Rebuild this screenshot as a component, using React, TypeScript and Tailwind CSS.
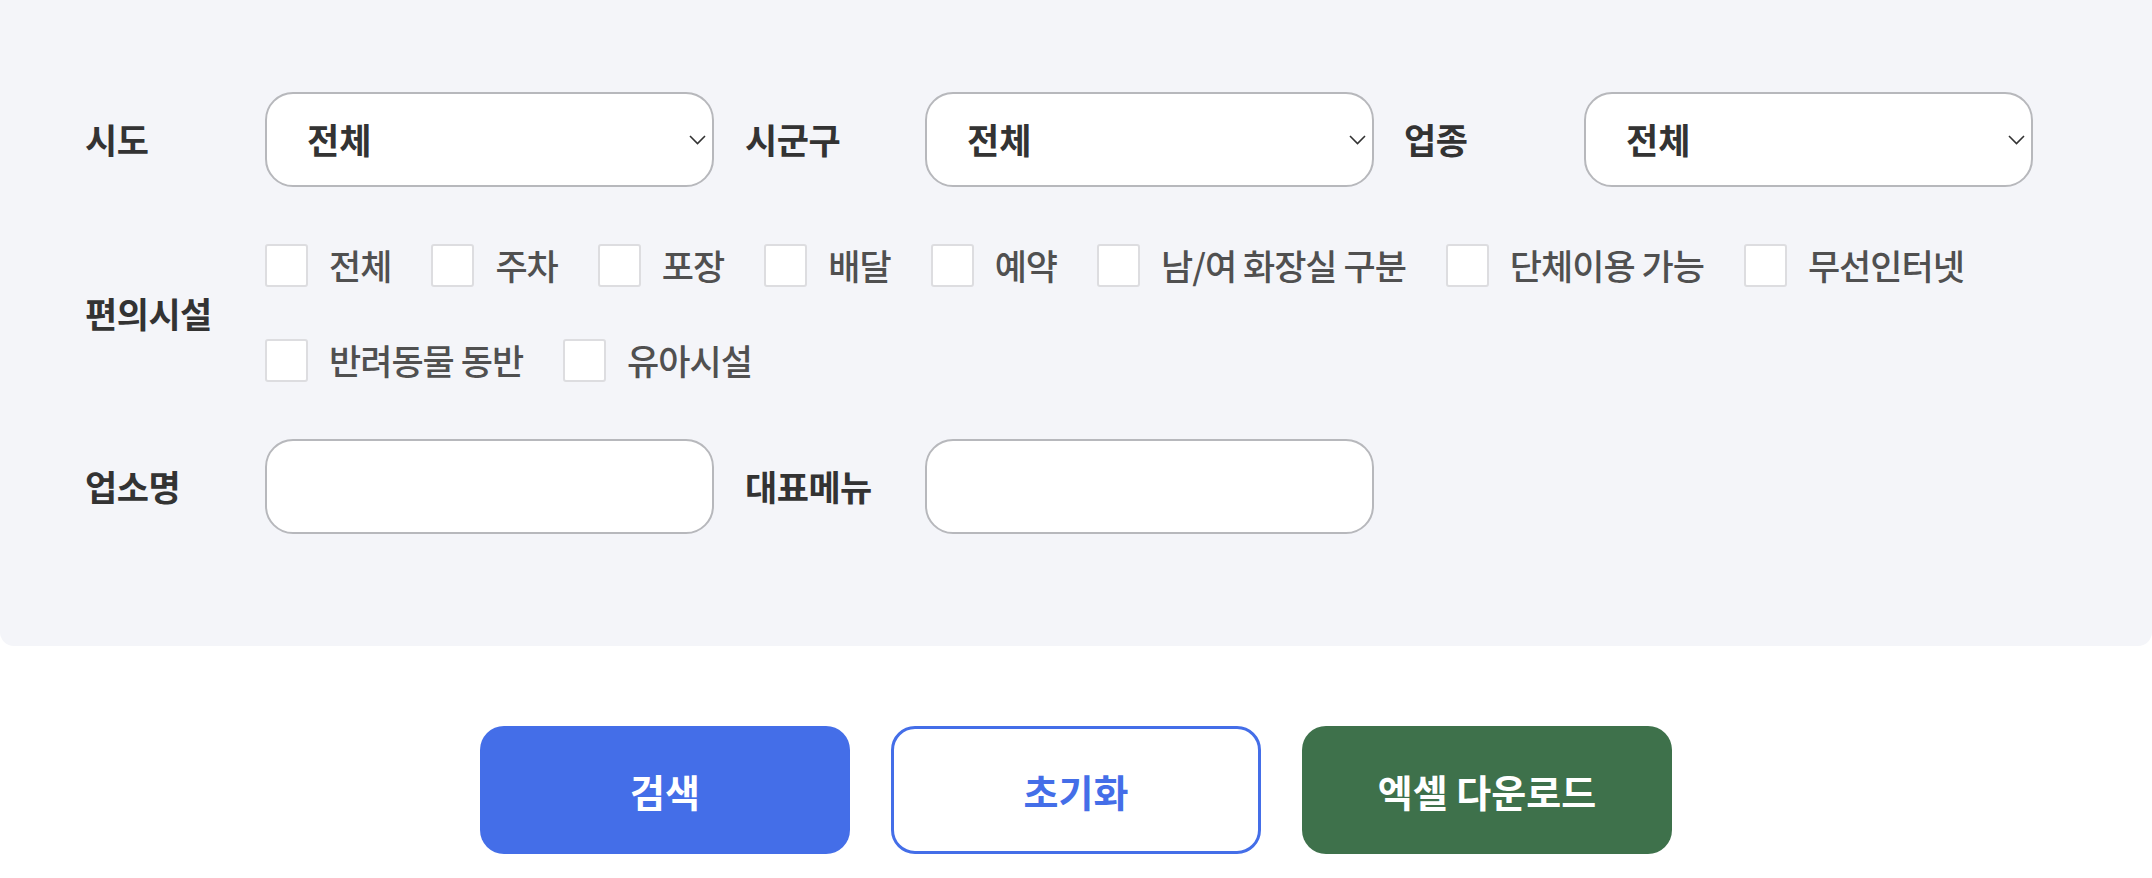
import { useState } from 'react'

const facilities = [
  '전체',
  '주차',
  '포장',
  '배달',
  '예약',
  '남/여 화장실 구분',
  '단체이용 가능',
  '무선인터넷',
  '반려동물 동반',
  '유아시설',
]

function Label({ children, className = '' }: { children: React.ReactNode; className?: string }) {
  return (
    <div className={`w-[180px] shrink-0 text-[35px] font-bold tracking-[-0.5px] text-[#333] ${className}`}>{children}</div>
  )
}

function Select({ value }: { value: string }) {
  return (
    <div className="relative h-[95px] w-[449px] shrink-0">
      <select
        defaultValue={value}
        className="h-full w-full appearance-none rounded-[28px] border-2 border-[#b7b8bc] bg-white pl-[40px] text-[35px] font-bold text-[#333] outline-none"
      >
        <option>{value}</option>
      </select>
      <svg
        className="pointer-events-none absolute right-[8px] top-1/2 -translate-y-1/2"
        width="17"
        height="10"
        viewBox="0 0 17 10"
        fill="none"
      >
        <path d="M1 1l7.5 7.5L16 1" stroke="#333" strokeWidth="1.6" />
      </svg>
    </div>
  )
}

function TextInput() {
  return (
    <input
      type="text"
      className="h-[95px] w-[449px] shrink-0 rounded-[28px] border-2 border-[#b7b8bc] bg-white px-[40px] text-[35px] text-[#333] outline-none"
    />
  )
}

export default function App() {
  const [checked, setChecked] = useState<Record<string, boolean>>({})

  return (
    <div className="min-h-[878px] w-[2152px] bg-white font-['Noto_Sans_CJK_KR',sans-serif]">
      <div className="flex flex-col gap-[31px] rounded-b-[14px] bg-[#f4f5f9] pb-[112px] pl-[85px] pt-[92px]">
        <div className="flex items-center">
          <Label>시도</Label>
          <Select value="전체" />
          <Label className="ml-[31px]">시군구</Label>
          <Select value="전체" />
          <Label className="ml-[30px]">업종</Label>
          <Select value="전체" />
        </div>

        <div className="flex items-center">
          <Label>편의시설</Label>
          <div className="flex w-[1769px] flex-wrap gap-x-[40px]">
            {facilities.map((f) => (
              <label key={f} className="flex h-[95px] cursor-pointer items-center">
                <input
                  type="checkbox"
                  checked={!!checked[f]}
                  onChange={() => setChecked((c) => ({ ...c, [f]: !c[f] }))}
                  className="h-[43px] w-[43px] shrink-0 appearance-none rounded-[3px] border-2 border-[#dddde0] bg-white checked:bg-[#4470e6]"
                />
                <span className="ml-[21px] whitespace-nowrap text-[35px] font-medium tracking-[-1px] text-[#505050]">{f}</span>
              </label>
            ))}
          </div>
        </div>

        <div className="flex items-center">
          <Label>업소명</Label>
          <TextInput />
          <Label className="ml-[31px]">대표메뉴</Label>
          <TextInput />
        </div>
      </div>

      <div className="flex justify-center gap-[41px] pt-[80px]">
        <button className="h-[128px] w-[370px] rounded-[24px] bg-[#446ee8] text-[38px] font-bold text-white">
          검색
        </button>
        <button className="h-[128px] w-[370px] rounded-[24px] border-[3px] border-[#446ee8] bg-white text-[38px] font-bold text-[#446ee8]">
          초기화
        </button>
        <button className="h-[128px] w-[370px] rounded-[24px] bg-[#3e714b] text-[38px] font-bold text-white">
          엑셀 다운로드
        </button>
      </div>
    </div>
  )
}
